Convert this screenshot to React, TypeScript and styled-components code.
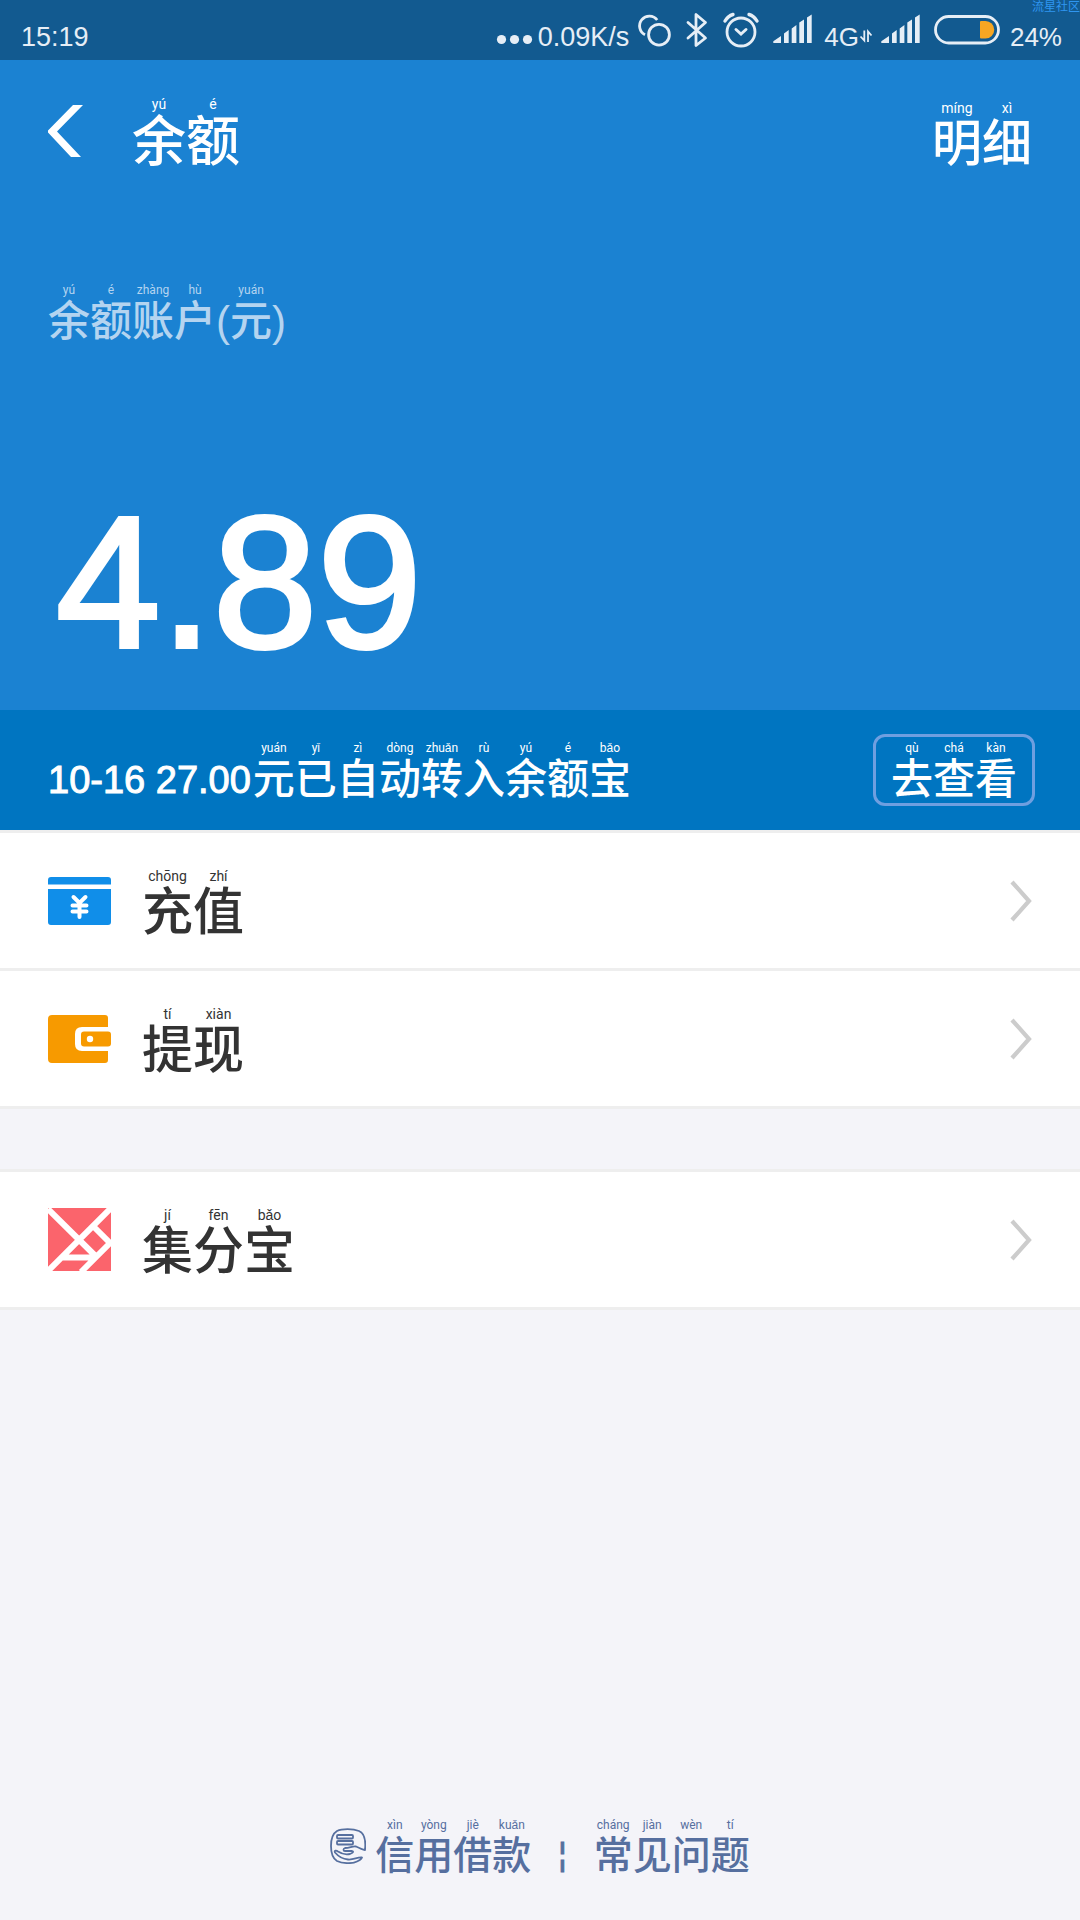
import React from 'react';
import styled, { createGlobalStyle } from 'styled-components';

const hanFont = '"Liberation Sans", "Noto Sans CJK SC", sans-serif';

const GlobalStyle = createGlobalStyle`
  *, *::before, *::after { box-sizing: border-box; }
  body { margin: 0; background: #f4f4f9; font-family: ${hanFont}; }
  button { border: 0; padding: 0; margin: 0; background: none; color: inherit; font: inherit; cursor: pointer; text-align: left; }
  svg { display: block; flex: none; }
`;

const Page = styled.div`
  position: relative;
  min-height: 100vh;
  display: flex;
  flex-direction: column;
  overflow: hidden;
`;

const StatusBar = styled.div`
  height: 60px;
  padding: 0 18px 0 21px;
  display: flex;
  justify-content: space-between;
  background: #125a90;
  color: #e6eef6;
`;

const StatusGroup = styled.div`
  display: flex;
`;

const StatusText = styled.span<{ $size?: number; $indent?: number }>`
  font-size: ${(p) => p.$size ?? 26}px;
  line-height: 30px;
  padding-top: 22px;
  padding-left: ${(p) => p.$indent ?? 0}px;
`;

const Watermark = styled.span`
  position: absolute;
  top: 0;
  right: 0;
  font-size: 12px;
  line-height: 14px;
  color: #2f96f0;
`;

const Hero = styled.header`
  padding: 35px 48px 33px;
  background: #1b82d2;
  color: #fff;
`;

const NavRow = styled.div`
  display: flex;
  align-items: flex-end;
`;

const BackButton = styled.button`
  width: 84px;
  padding-bottom: 12px;
`;

const Title = styled.h1`
  margin: 0;
  flex: 1;
  font-size: 54px;
  font-weight: 500;
`;

const NavAction = styled.button`
  font-size: 50px;
  font-weight: 500;
`;

const BalanceLabel = styled.p`
  margin: 112px 0 0;
  font-size: 42px;
  font-weight: 500;
  color: #b4d4f0;
`;

const Amount = styled.p`
  margin: 144px 0 0;
  padding-left: 8px;
  font-size: 188px;
  line-height: 190px;
  -webkit-text-stroke: 4px currentColor;
`;

const Banner = styled.section`
  height: 120px;
  padding: 0 45px 0 48px;
  display: flex;
  align-items: center;
  justify-content: space-between;
  background: #0075c1;
  color: #fff;
  font-size: 42px;
  font-weight: 500;
`;

const BannerText = styled.p`
  margin: 0;
  display: flex;
  align-items: flex-end;
`;

const Digits = styled.span`
  font-size: 38px;
  font-weight: 400;
  line-height: 42px;
  padding-right: 2px;
  -webkit-text-stroke: 1px currentColor;
`;

const ViewButton = styled.button`
  height: 72px;
  padding: 0 15px;
  border: 3px solid #6f9fe0;
  border-radius: 12px;
`;

const Phrase = styled.span`
  display: inline-flex;
  align-items: flex-end;
  vertical-align: bottom;
  line-height: 1;
`;

const Syllable = styled.ruby`
  display: inline-flex;
  flex-direction: column-reverse;
  align-items: center;
  gap: 2px;
`;

const Pinyin = styled.rt<{ $size: number }>`
  display: block;
  font-family: Roboto, sans-serif;
  font-size: ${(p) => p.$size}px;
  font-weight: 400;
  line-height: 18px;
`;

const Menu = styled.nav`
  border-top: 3px solid #eee;
  background: #fff;

  & + & { margin-top: 60px; }
`;

const MenuItem = styled.button`
  width: 100%;
  height: 138px;
  padding: 0 48px;
  display: flex;
  align-items: center;
  gap: 31px;
  border-bottom: 3px solid #eee;
  color: #333;
  font-size: 51px;
  font-weight: 500;
`;

const MenuLabel = styled.span`
  flex: 1;
  padding-top: 3px;
`;

const Footer = styled.footer`
  margin-top: auto;
  padding: 48px 0 45px;
  display: flex;
  justify-content: center;
  align-items: flex-end;
  gap: 27px;
  color: #566f9f;
  font-size: 39px;
  font-weight: 500;
`;

const FooterLink = styled.a`
  display: flex;
  align-items: center;
  gap: 9px;
  color: inherit;
  text-decoration: none;
`;

const Divider = styled.span`
  font-size: 32px;
  line-height: 42px;
  -webkit-text-stroke: 1px currentColor;
`;

type Pair = [string, string?];

function Annotated({ pairs, small }: { pairs: Pair[]; small?: boolean }) {
  return (
    <Phrase>
      {pairs.map(([han, pinyin], i) =>
        pinyin ? (
          <Syllable key={i}>
            <span>{han}</span>
            <Pinyin $size={small ? 12 : 14}>{pinyin}</Pinyin>
          </Syllable>
        ) : (
          <span key={i}>{han}</span>
        )
      )}
    </Phrase>
  );
}

const DotsIcon = () => (
  <svg width="51" height="60" viewBox="487 0 51 60" fill="currentColor">
    <circle cx="501.500" cy="39.500" r="4.600" />
    <circle cx="514.500" cy="39.500" r="4.600" />
    <circle cx="527.500" cy="39.500" r="4.600" />
  </svg>
);

const LinkedCirclesIcon = () => (
  <svg width="49" height="60" viewBox="629 0 49 60" fill="none" stroke="currentColor" strokeWidth="2.800">
    <circle cx="659" cy="34.700" r="10.400" />
    <path d="M657.200 20A9.800 9.800 0 1 0 645 34.700" />
  </svg>
);

const BluetoothIcon = () => (
  <svg width="38" height="60" viewBox="678 0 38 60" fill="none" stroke="currentColor" strokeWidth="2.800" strokeLinejoin="round" strokeLinecap="round">
    <path d="M688 38L705.500 22.500L696 14.500V45.500L705.500 38L688 22.500" />
  </svg>
);

const AlarmIcon = () => (
  <svg width="52" height="60" viewBox="716 0 52 60" fill="none" stroke="currentColor" strokeWidth="2.800" strokeLinecap="round">
    <circle cx="741" cy="32" r="14" />
    <path d="M736 29.500L741 34L746 29.500" strokeWidth="3" />
    <path d="M725 21Q728 16 733 14.500M749 14.500Q754 16 757 21" strokeWidth="3.400" />
  </svg>
);

const SignalIcon = () => (
  <svg width="52" height="60" viewBox="0 0 52 60" fill="currentColor">
    <path d="M5.300 43V41.300L13 36V43ZM16 43V33.500L20.700 30V43ZM23.700 43V28.500L28.400 25V43ZM31.300 43V22.500L36 19.500V43ZM39 43V17.500L43.700 14.500V43Z" />
  </svg>
);

const DataArrowsIcon = () => (
  <svg width="17" height="60" viewBox="859 0 17 60" fill="none" stroke="currentColor" strokeWidth="1.800">
    <path d="M864.300 30.500V40.500L860.500 36.500M868 42V31.500L871.500 35.500" />
  </svg>
);

const BatteryIcon = () => (
  <svg width="82" height="60" viewBox="928 0 82 60">
    <rect x="935.500" y="16.500" width="63" height="26.500" rx="13.200" fill="none" stroke="currentColor" strokeWidth="2.800" />
    <path d="M981 21H985.500A8.500 8.500 0 0 1 985.500 38.500H981Q980 38.500 980 37.500V22Q980 21 981 21Z" fill="#f6a623" />
  </svg>
);

const BackIcon = () => (
  <svg width="36" height="52" viewBox="0 0 36 52" fill="currentColor">
    <path d="M25 0H35L9 26.500L33 52H23L-1 26.500Z" />
  </svg>
);

const ChevronIcon = () => (
  <svg width="22" height="42" viewBox="0 0 22 42" fill="none" stroke="#ccc" strokeWidth="4.200">
    <path d="M2 2L19 21L2 40" />
  </svg>
);

const TopUpIcon = () => (
  <svg width="63" height="48" viewBox="0 0 63 48">
    <path d="M3 0H60Q63 0 63 3V7.500H0V3Q0 0 3 0ZM0 12H63V45Q63 48 60 48H3Q0 48 0 45Z" fill="#108ee9" />
    <path d="M25.500 20L31.500 26L37.500 20M31.500 26V40M24.500 28.500H38.500M24.500 34.500H38.500" fill="none" stroke="#fff" strokeWidth="4" strokeLinecap="round" />
  </svg>
);

const WalletIcon = () => (
  <svg width="63" height="48" viewBox="0 0 63 48">
    <path d="M4 0H57Q60 0 60 3V12H34Q27 12 27 19V29Q27 36 34 36H60V45Q60 48 57 48H4Q0 48 0 44V4Q0 0 4 0Z" fill="#f79a00" />
    <path d="M36 16.500H60Q63 16.500 63 19.500V28.500Q63 31.500 60 31.500H36Q33 31.500 33 28.500V19.500Q33 16.500 36 16.500Z" fill="#f79a00" />
    <circle cx="42" cy="24" r="3.200" fill="#fff" />
  </svg>
);

const PointsIcon = () => (
  <svg width="63" height="63" viewBox="0 0 63 63">
    <rect width="63" height="63" fill="#fb646c" />
    <path d="M0 1L48 48.500M63 0L0 63M45 18L63 36M63 34L33 64M14 49.500H46" fill="none" stroke="#fff" strokeWidth="6" />
  </svg>
);

const CreditIcon = () => (
  <svg width="36" height="36" viewBox="0 0 36 36" fill="none" stroke="currentColor" strokeWidth="1.800" strokeLinejoin="round" strokeLinecap="round">
    <path d="M35 22C36 12 34 5 29 3C23 0.500 12 0.500 7 3C2 6 1 11 1 18C1 25 2 30 7 33C12 35.500 22 36 27 33.500C29.500 32.500 31.500 31 32 29.500C27 29 24 32 18 31.500C12 31 8 28 5 24.500C4 22.500 6 22 8 23.500C11 25.500 15 27 20 26C23 25 24 23.500 22 23H15C13 23 13 20.500 15 20C20 20 22 18 26 18.500C29 20 32 21.500 35 22Z" />
    <rect x="7" y="7" width="16" height="3.500" rx="1" />
    <rect x="7" y="13" width="16" height="3.500" rx="1" />
  </svg>
);

const topMenu: { icon: React.ReactNode; pairs: Pair[] }[] = [
  { icon: <TopUpIcon />, pairs: [['充', 'chōng'], ['值', 'zhí']] },
  { icon: <WalletIcon />, pairs: [['提', 'tí'], ['现', 'xiàn']] },
];

const pointsMenu: { icon: React.ReactNode; pairs: Pair[] }[] = [
  { icon: <PointsIcon />, pairs: [['集', 'jí'], ['分', 'fēn'], ['宝', 'bǎo']] },
];

function MenuGroup({ items }: { items: typeof topMenu }) {
  return (
    <Menu>
      {items.map((item, i) => (
        <MenuItem key={i} type="button">
          {item.icon}
          <MenuLabel><Annotated pairs={item.pairs} /></MenuLabel>
          <ChevronIcon />
        </MenuItem>
      ))}
    </Menu>
  );
}

export default function App() {
  return (
    <Page>
      <GlobalStyle />
      <StatusBar>
        <StatusText $size={27}>15:19</StatusText>
        <StatusGroup>
          <DotsIcon />
          <StatusText $size={27}>0.09K/s</StatusText>
          <LinkedCirclesIcon />
          <BluetoothIcon />
          <AlarmIcon />
          <SignalIcon />
          <StatusText $indent={4}>4G</StatusText>
          <DataArrowsIcon />
          <SignalIcon />
          <BatteryIcon />
          <StatusText>24%</StatusText>
        </StatusGroup>
      </StatusBar>
      <Watermark>流星社区</Watermark>

      <Hero>
        <NavRow>
          <BackButton type="button" aria-label="返回"><BackIcon /></BackButton>
          <Title><Annotated pairs={[['余', 'yú'], ['额', 'é']]} /></Title>
          <NavAction type="button"><Annotated pairs={[['明', 'míng'], ['细', 'xì']]} /></NavAction>
        </NavRow>
        <BalanceLabel>
          <Annotated small pairs={[['余', 'yú'], ['额', 'é'], ['账', 'zhàng'], ['户', 'hù'], ['('], ['元', 'yuán'], [')']]} />
        </BalanceLabel>
        <Amount>4.89</Amount>
      </Hero>

      <Banner>
        <BannerText>
          <Digits>10-16 27.00</Digits>
          <Annotated
            small
            pairs={[['元', 'yuán'], ['已', 'yǐ'], ['自', 'zì'], ['动', 'dòng'], ['转', 'zhuǎn'], ['入', 'rù'], ['余', 'yú'], ['额', 'é'], ['宝', 'bǎo']]}
          />
        </BannerText>
        <ViewButton type="button">
          <Annotated small pairs={[['去', 'qù'], ['查', 'chá'], ['看', 'kàn']]} />
        </ViewButton>
      </Banner>

      <MenuGroup items={topMenu} />
      <MenuGroup items={pointsMenu} />

      <Footer>
        <FooterLink href="#credit">
          <CreditIcon />
          <Annotated small pairs={[['信', 'xìn'], ['用', 'yòng'], ['借', 'jiè'], ['款', 'kuǎn']]} />
        </FooterLink>
        <Divider>¦</Divider>
        <FooterLink href="#faq">
          <Annotated small pairs={[['常', 'cháng'], ['见', 'jiàn'], ['问', 'wèn'], ['题', 'tí']]} />
        </FooterLink>
      </Footer>
    </Page>
  );
}
